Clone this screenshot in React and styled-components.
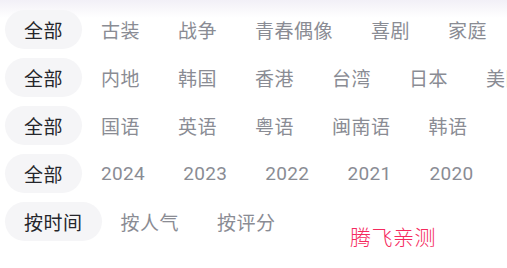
import React from "react";
import styled, { createGlobalStyle } from "styled-components";

const Global = createGlobalStyle`
  html, body { margin: 0; padding: 0; background: #ffffff; }
  body { font-family: Roboto, "Noto Sans CJK SC", sans-serif; }
`;

const Page = styled.div`
  position: relative;
  width: 507px;
  height: 268px;
  overflow: hidden;
  background: linear-gradient(180deg, #f2f0f7 0px, #ffffff 18px);
  padding: 10px 0 0 5px;
  box-sizing: border-box;
  display: flex;
  flex-direction: column;
  gap: 9px;
`;

const Row = styled.div`
  display: flex;
  flex-wrap: nowrap;
  white-space: nowrap;
`;

const Chip = styled.div`
  flex: none;
  height: 39px;
  padding: 0 19px;
  border-radius: 20px;
  display: flex;
  align-items: center;
  font-size: 19px;
  letter-spacing: ${(p) => (p.$numeric ? "0.35px" : "0.5px")};
  color: ${(p) => (p.$active ? "#25262b" : "#8a8c94")};
  background: ${(p) => (p.$active ? "#f5f5f7" : "transparent")};
`;

const Watermark = styled.div`
  position: absolute;
  left: 350px;
  top: 221px;
  font-family: "Noto Sans CJK SC", sans-serif;
  font-weight: 300;
  font-size: 21px;
  letter-spacing: 0.5px;
  color: #f52a5e;
`;

const rows = [
  ["全部", "古装", "战争", "青春偶像", "喜剧", "家庭"],
  ["全部", "内地", "韩国", "香港", "台湾", "日本", "美国"],
  ["全部", "国语", "英语", "粤语", "闽南语", "韩语"],
  ["全部", "2024", "2023", "2022", "2021", "2020"],
  ["按时间", "按人气", "按评分"],
];

export default function App() {
  return (
    <>
      <Global />
      <Page>
        {rows.map((r, i) => (
          <Row key={i}>
            {r.map((t, j) => (
              <Chip key={j} $active={j === 0} $numeric={/^\d+$/.test(t)}>
                {t}
              </Chip>
            ))}
          </Row>
        ))}
        <Watermark>腾飞亲测</Watermark>
      </Page>
    </>
  );
}
